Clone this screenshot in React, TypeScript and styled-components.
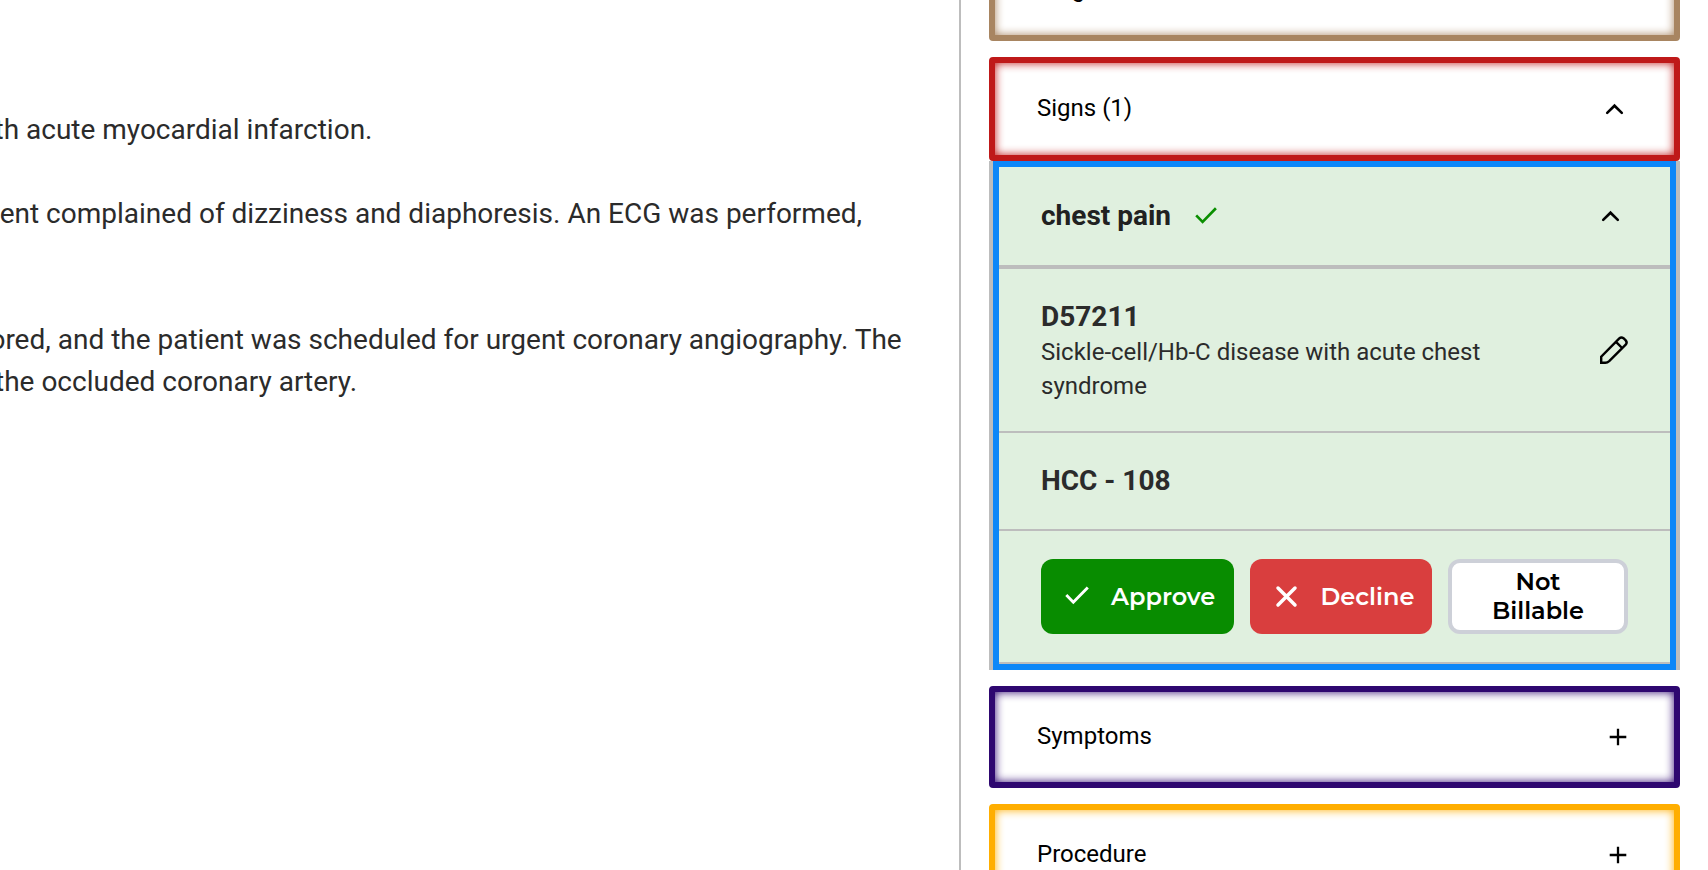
import React from "react";
import styled, { createGlobalStyle } from "styled-components";

const Global = createGlobalStyle`
  *, *::before, *::after { box-sizing: border-box; }
  html, body { margin: 0; height: 100%; overflow: hidden; background: #fff; }
  body { font-family: Roboto, "Liberation Sans", sans-serif; color: #2b2b2b; }
`;

const Page = styled.div`
  display: flex;
  width: 1708px;
  height: 870px;
  overflow: hidden;
`;

const Note = styled.main`
  flex: none;
  width: 961px;
  padding-top: 109px;
  border-right: 2px solid #bdbdbd;
  overflow: hidden;
`;

const Paragraph = styled.div`
  margin-bottom: 42px;
  & + & + & { margin-top: 84px; }
`;

const Line = styled.p<{ $shift: number }>`
  margin: 0 0 0 ${(p) => p.$shift}px;
  font-size: 28px;
  line-height: 42px;
  white-space: nowrap;
`;

const Sidebar = styled.aside`
  flex: none;
  display: flex;
  flex-direction: column;
  justify-content: flex-start;
  width: 719px;
  padding-left: 28px;
  margin-top: -61px;
`;

const Category = styled.section`
  flex: none;
  margin-bottom: 16px;
`;

const CategoryHeader = styled.header<{ $color: string; $height?: number }>`
  display: flex;
  align-items: center;
  justify-content: space-between;
  height: ${(p) => p.$height ?? 102}px;
  padding: 0 42px 2px;
  border: 6px solid ${(p) => p.$color};
  border-radius: 4px;
  box-shadow: inset 0 0 10px ${(p) => p.$color};
  background: #fff;
  color: #000;
  font-size: 24px;
  line-height: 34px;
`;

const Entries = styled.div`
  border: solid #bdbdbd;
  border-width: 0 4px;
`;

const Entry = styled.article`
  border: 6px solid #0d87f8;
  background: #e0f0df;
`;

const EntryHeader = styled.header`
  display: flex;
  align-items: center;
  height: 102px;
  padding: 0 51.5px 0 42px;
  border-bottom: 4px solid #bdbdbd;
  color: #212121;
`;

const Term = styled.h3`
  margin: 0;
  font-size: 28px;
  line-height: 42px;
  font-weight: 700;
`;

const CodeRow = styled.div`
  display: flex;
  align-items: center;
  justify-content: space-between;
  height: 164px;
  padding: 4px 42px 2px;
  border-bottom: 2px solid #bdbdbd;
`;

const Code = styled.div`
  font-size: 28px;
  line-height: 36px;
  font-weight: 700;
`;

const Description = styled.div`
  width: 460px;
  font-size: 24px;
  line-height: 34px;
`;

const HccRow = styled.div`
  display: flex;
  align-items: center;
  height: 98px;
  padding: 0 42px;
  border-bottom: 2px solid #bdbdbd;
  color: #2b2b2b;
`;

const Actions = styled.div`
  display: flex;
  gap: 16px;
  height: 133px;
  padding: 28px 42px 0;
  border-bottom: 2px solid #bdbdbd;
`;

const Button = styled.button<{ $bg: string; $width: number }>`
  display: flex;
  align-items: center;
  flex: none;
  width: ${(p) => p.$width}px;
  height: 75px;
  padding: 0 0 0 24px;
  border: 0;
  border-radius: 12px;
  background: ${(p) => p.$bg};
  color: #fff;
  font: 600 24px/29px Montserrat, Inter, sans-serif;
`;

const OutlineButton = styled(Button)`
  justify-content: center;
  padding: 0 0 2px;
  border: 4px solid #cdd0d8;
  color: #000;
  text-align: center;
`;

const ButtonLabel = styled.span<{ $left: number }>`
  margin-left: ${(p) => p.$left}px;
`;

const Icon = styled.svg<{ $left?: string; $nudge?: number }>`
  display: block;
  flex: none;
  overflow: visible;
  fill: none;
  stroke: currentColor;
  margin-left: ${(p) => p.$left ?? "0"};
  margin-top: ${(p) => p.$nudge ?? 0}px;
`;

const ChevronUp = ({ left, nudge, right }: { left?: string; nudge?: number; right?: number }) => (
  <Icon width={17 + (right ?? 0)} height={10} $left={left} $nudge={nudge} color="#000">
    <path d="M1.2 8.9 8.5 1.7 15.8 8.9" strokeWidth="2.6" strokeLinecap="round" />
  </Icon>
);

const Plus = () => (
  <Icon width="23" height="18" $nudge={2} color="#000">
    <path d="M9 .7V17.3M.7 9H17.3" strokeWidth="2.3" />
  </Icon>
);

const Tick = ({ size, color, nudge }: { size: number; color: string; nudge: number }) => (
  <Icon width={size} height={size * 0.75} viewBox="0 0 24 18" color={color} $nudge={nudge}>
    <path d="M1.3 9.1 8.3 16.2 22.8 1.4" strokeWidth="2.9" />
  </Icon>
);

const Cross = () => (
  <Icon width="21" height="21" $left="1.5px" $nudge={-1}>
    <path d="M2 2 19 19M19 2 2 19" strokeWidth="3.5" strokeLinecap="round" />
  </Icon>
);

const Pencil = () => (
  <Icon width="28" height="28" color="#000" $nudge={-2}>
    <path
      d="M1.2 26.8V20.7L19.3 2.4Q21.3.5 23.5 2.2L25.7 4.4Q27.6 6.6 25.7 8.7L9.2 25.2Q7.4 26.8 5.4 26.8ZM16 5.9 22.1 12"
      strokeWidth="2.4"
    />
  </Icon>
);

const TermTick = styled.span`
  margin-left: 24px;
`;

export default function App() {
  return (
    <>
      <Global />
      <Page>
        <Note>
          <Paragraph>
            <Line $shift={-5.5}>th acute myocardial infarction.</Line>
          </Paragraph>
          <Paragraph>
            <Line $shift={-0.3}>ent complained of dizziness and diaphoresis. An ECG was performed,</Line>
          </Paragraph>
          <Paragraph>
            <Line $shift={-10.6}>
              ored, and the patient was scheduled for urgent coronary angiography. The
            </Line>
            <Line $shift={-5}>the occluded coronary artery.</Line>
          </Paragraph>
        </Note>

        <Sidebar>
          <Category>
            <CategoryHeader $color="#a88561">
              <span>Diagnosis</span>
              <Plus />
            </CategoryHeader>
          </Category>

          <Category>
            <CategoryHeader $color="#bf1919" $height={104}>
              <span>Signs (1)</span>
              <ChevronUp nudge={2} right={9} />
            </CategoryHeader>
            <Entries>
              <Entry>
                <EntryHeader>
                  <Term>chest pain</Term>
                  <TermTick>
                    <Tick size={22} color="#0a8f00" nudge={-1} />
                  </TermTick>
                  <ChevronUp left="auto" nudge={0} />
                </EntryHeader>
                <CodeRow>
                  <div>
                    <Code>D57211</Code>
                    <Description>Sickle-cell/Hb-C disease with acute chest syndrome</Description>
                  </div>
                  <Pencil />
                </CodeRow>
                <HccRow>
                  <Term>HCC - 108</Term>
                </HccRow>
                <Actions>
                  <Button $bg="#088c00" $width={193}>
                    <Tick size={24} color="#fff" nudge={-2.5} />
                    <ButtonLabel $left={22}>Approve</ButtonLabel>
                  </Button>
                  <Button $bg="#d93e3e" $width={182}>
                    <Cross />
                    <ButtonLabel $left={24}>Decline</ButtonLabel>
                  </Button>
                  <OutlineButton $bg="#fff" $width={180}>
                    Not
                    <br />
                    Billable
                  </OutlineButton>
                </Actions>
              </Entry>
            </Entries>
          </Category>

          <Category>
            <CategoryHeader $color="#2e0770">
              <span>Symptoms</span>
              <Plus />
            </CategoryHeader>
          </Category>

          <Category>
            <CategoryHeader $color="#ffae00">
              <span>Procedure</span>
              <Plus />
            </CategoryHeader>
          </Category>
        </Sidebar>
      </Page>
    </>
  );
}
